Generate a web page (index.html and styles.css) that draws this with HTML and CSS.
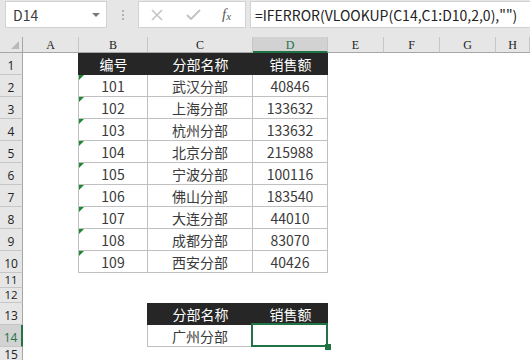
FILE: index.html
```html
<!DOCTYPE html>
<html lang="zh-CN">
<head>
<meta charset="utf-8">
<link rel="stylesheet" href="styles.css">
</head>
<body>
<div class="toolbar">
  <div class="namebox"><span class="name">D14</span><span class="drop"></span></div>
  <div class="dots"><i></i><i></i><i></i></div>
  <div class="fxbox">
    <svg class="ico" width="12" height="12" viewBox="0 0 12 12"><path d="M1 1L11 11M11 1L1 11" stroke="#c4c4c4" stroke-width="1.6" fill="none"/></svg>
    <svg class="ico" width="15" height="11" viewBox="0 0 15 11"><path d="M1 6L5 10L14 1" stroke="#c4c4c4" stroke-width="2" fill="none"/></svg>
    <span class="fx">f<sub>x</sub></span>
  </div>
  <div class="formula">=IFERROR(VLOOKUP(C14,C1:D10,2,0),"")</div>
</div>
<div class="sheet">
  <div class="corner"><span class="tri"></span></div>
  <div class="ch">A</div><div class="ch">B</div><div class="ch">C</div><div class="ch sel">D</div><div class="ch">E</div><div class="ch">F</div><div class="ch">G</div><div class="ch">H</div>

  <div class="rh">1</div><div class="edge-dark"></div><div class="th">编号</div><div class="th">分部名称</div><div class="th">销售额</div><div></div><div></div><div></div><div></div>

  <div class="rh">2</div><div class="edge"></div><div class="td num">101</div><div class="td">武汉分部</div><div class="td">40846</div><div></div><div></div><div></div><div></div>
  <div class="rh">3</div><div class="edge"></div><div class="td num">102</div><div class="td">上海分部</div><div class="td">133632</div><div></div><div></div><div></div><div></div>
  <div class="rh">4</div><div class="edge"></div><div class="td num">103</div><div class="td">杭州分部</div><div class="td">133632</div><div></div><div></div><div></div><div></div>
  <div class="rh">5</div><div class="edge"></div><div class="td num">104</div><div class="td">北京分部</div><div class="td">215988</div><div></div><div></div><div></div><div></div>
  <div class="rh">6</div><div class="edge"></div><div class="td num">105</div><div class="td">宁波分部</div><div class="td">100116</div><div></div><div></div><div></div><div></div>
  <div class="rh">7</div><div class="edge"></div><div class="td num">106</div><div class="td">佛山分部</div><div class="td">183540</div><div></div><div></div><div></div><div></div>
  <div class="rh">8</div><div class="edge"></div><div class="td num">107</div><div class="td">大连分部</div><div class="td">44010</div><div></div><div></div><div></div><div></div>
  <div class="rh">9</div><div class="edge"></div><div class="td num">108</div><div class="td">成都分部</div><div class="td">83070</div><div></div><div></div><div></div><div></div>
  <div class="rh">10</div><div class="edge"></div><div class="td num">109</div><div class="td">西安分部</div><div class="td">40426</div><div></div><div></div><div></div><div></div>

  <div class="rh short">11</div><div></div><div></div><div></div><div></div><div></div><div></div><div></div><div></div>
  <div class="rh short">12</div><div></div><div></div><div></div><div></div><div></div><div></div><div></div><div></div>

  <div class="rh">13</div><div></div><div class="edge-dark"></div><div class="th">分部名称</div><div class="th">销售额</div><div></div><div></div><div></div><div></div>
  <div class="rh sel">14</div><div></div><div class="edge"></div><div class="td">广州分部</div><div class="td active"><span class="selbox"><span class="handle"></span></span></div><div></div><div></div><div></div><div></div>
  <div class="rh last">15</div><div></div><div></div><div></div><div></div><div></div><div></div><div></div><div></div>
</div>
</body>
</html>
```

FILE: styles.css
```css
html, body {
  margin: 0;
  padding: 0;
}
body {
  width: 530px;
  height: 360px;
  overflow: hidden;
  background: #ffffff;
  font-family: "Noto Sans CJK SC", "Noto Sans", sans-serif;
}

/* toolbar */
.toolbar {
  height: 37px;
  box-sizing: border-box;
  background: #e6e6e6;
  display: flex;
  align-items: flex-start;
  padding: 1px 0 0 5px;
}
.namebox {
  width: 102px;
  height: 27px;
  box-sizing: border-box;
  background: #fff;
  border: 1px solid #d2d2d2;
  display: flex;
  align-items: center;
  justify-content: space-between;
  padding: 0 6px 0 7px;
}
.name {
  font-size: 14px;
  color: #3b3b3b;
  font-family: "Noto Sans CJK SC", "Noto Sans", sans-serif;
}
.drop {
  width: 0;
  height: 0;
  border-left: 4px solid transparent;
  border-right: 4px solid transparent;
  border-top: 4px solid #7a7a7a;
}
.dots {
  width: 31px;
  height: 27px;
  display: flex;
  flex-direction: column;
  align-items: center;
  justify-content: center;
  gap: 2px;
}
.dots i {
  display: block;
  width: 2px;
  height: 2px;
  background: #b3b3b3;
}
.fxbox {
  width: 108px;
  height: 27px;
  box-sizing: border-box;
  background: #fff;
  border: 1px solid #d2d2d2;
  display: flex;
  align-items: center;
  padding-left: 12px;
}
.ico {
  display: block;
}
.fxbox .ico:first-child {
  margin-right: 23px;
}
.fxbox .ico:nth-child(2) {
  margin-right: 21px;
}
.fx {
  font-family: "Liberation Serif", serif;
  font-style: italic;
  font-size: 15px;
  color: #5a5a5a;
  line-height: 1;
}
.fx sub {
  font-size: 11px;
  vertical-align: baseline;
  position: relative;
  top: 1px;
}
.formula {
  margin-left: 4px;
  flex: 1;
  height: 27px;
  box-sizing: border-box;
  background: #fff;
  border: 1px solid #d2d2d2;
  border-right: none;
  display: flex;
  align-items: center;
  padding-left: 4px;
  font-family: "Noto Sans CJK SC", "Noto Sans", sans-serif;
  font-size: 14px;
  color: #222;
  white-space: nowrap;
  overflow: hidden;
}

/* sheet grid */
.sheet {
  display: grid;
  grid-template-columns: 23px 56px 69px 105px 75px 56px 56px 56px 34px;
  grid-template-rows: 16px repeat(10, 22px) 15px 15px 22px 22px 13px;
}
.sheet > div {
  box-sizing: border-box;
  min-width: 0;
}
.corner {
  background: #e6e6e6;
  border-right: 1px solid #a6a6a6;
  border-bottom: 1px solid #a6a6a6;
  position: relative;
}
.corner .tri {
  position: absolute;
  right: 3px;
  bottom: 3px;
  width: 0;
  height: 0;
  border-left: 8px solid transparent;
  border-bottom: 8px solid #b9b9b9;
}
.ch {
  background: #e6e6e6;
  border-right: 1px solid #c6c6c6;
  border-bottom: 1px solid #a6a6a6;
  font-family: "Liberation Serif", serif;
  font-size: 12px;
  color: #222;
  display: flex;
  align-items: center;
  justify-content: center;
  padding-top: 2px;
}
.ch.sel {
  background: #d2d2d2;
  color: #217346;
  border-bottom: 2px solid #217346;
  padding-top: 3px;
}
.rh {
  background: #e6e6e6;
  border-right: 1px solid #a6a6a6;
  border-bottom: 1px solid #c6c6c6;
  font-family: "Open Sans", "Liberation Sans", sans-serif;
  font-size: 12px;
  color: #222;
  display: flex;
  align-items: flex-end;
  justify-content: center;
  line-height: 12px;
  padding-bottom: 2px;
  overflow: hidden;
}
.rh.short {
  font-size: 11.5px;
  line-height: 12px;
  padding-bottom: 1px;
  overflow: visible;
}
.rh.last {
  align-items: flex-start;
  padding-top: 2px;
  padding-bottom: 0;
  border-bottom: none;
}
.rh.sel {
  background: #d2d2d2;
  color: #217346;
  border-right: 2px solid #217346;
}
.edge {
  border-right: 1px solid #c0c0c0;
}
.edge-dark {
  border-right: 1px solid #262626;
}
.th {
  background: #262626;
  color: #ffffff;
  font-size: 14px;
  display: flex;
  align-items: center;
  justify-content: center;
  border-bottom: 1px solid #262626;
}
.td {
  border-right: 1px solid #c0c0c0;
  border-bottom: 1px solid #c0c0c0;
  color: #3a3a3a;
  font-size: 14px;
  display: flex;
  align-items: center;
  justify-content: center;
  position: relative;
}
.num::before {
  content: "";
  position: absolute;
  left: 0;
  top: 0;
  width: 0;
  height: 0;
  border-top: 5px solid #1b8a2c;
  border-right: 5px solid transparent;
}
.active {
  position: relative;
}
.selbox {
  position: absolute;
  left: -2px;
  top: -2px;
  right: -1px;
  bottom: -1px;
  border: 2px solid #217346;
}
.handle {
  position: absolute;
  right: -5px;
  bottom: -5px;
  width: 6px;
  height: 6px;
  background: #217346;
}
```
